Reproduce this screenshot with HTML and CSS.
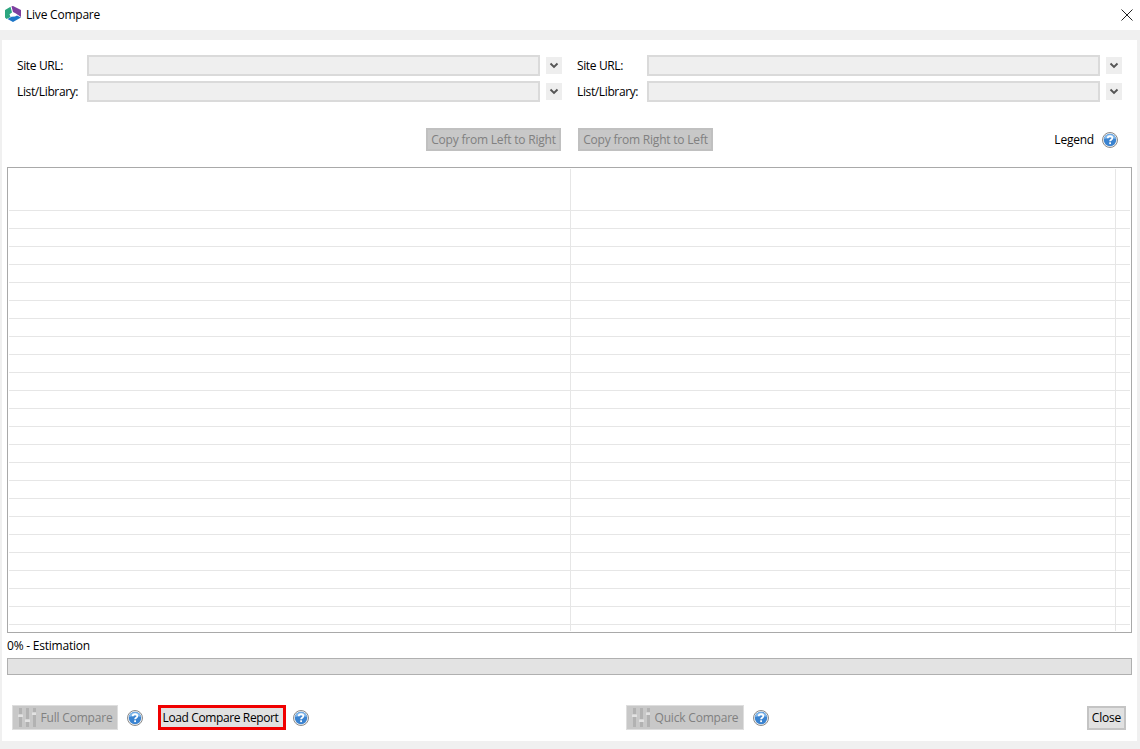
FILE: index.html
```html
<!DOCTYPE html>
<html lang="en">
<head>
<meta charset="utf-8">
<title>Live Compare</title>
<link rel="stylesheet" href="styles.css">
</head>
<body>
<svg class="defs" width="0" height="0" aria-hidden="true">
  <defs>
    <symbol id="help" viewBox="0 0 16 16">
      <circle cx="8" cy="8" r="7.500" fill="#f2f2f2" stroke="#8a8a8a" stroke-width="1"/>
      <circle cx="8" cy="8" r="6.200" fill="#3a83d0"/>
      <path d="M2 7a6.200 6.200 0 0 1 12 0c-3.500-1.500-8.500-1.500-12 0z" fill="#86bbec"/>
      <path d="M5.700 6.200c0-1.400 1.100-2.100 2.400-2.100s2.300.8 2.300 2c0 1.700-2.300 1.700-2.300 3.100" fill="none" stroke="#fff" stroke-width="1.800"/>
      <rect x="7.200" y="10.300" width="1.800" height="1.800" fill="#fff"/>
    </symbol>
    <symbol id="sliders" viewBox="0 0 18 19">
      <path d="M1 0h3v6H1zM1 9h3v10H1zM8 0h3v11H8zM8 14h3v5H8zM15 0h3v4h-3zM15 7h3v12h-3z" fill="#b2b2b2"/>
      <path d="M0 6.500h5V9H0zM7 11.500h5V14H7zM14 4.500h4V7h-4z" fill="#e2e2e2"/>
    </symbol>
    <symbol id="chev" viewBox="0 0 16 17">
      <path d="M4.500 6.500L8 10l3.500-3.500" fill="none" stroke="#555" stroke-width="1.900"/>
    </symbol>
  </defs>
</svg>
<div class="window">
  <header class="titlebar">
    <div class="title">
      <svg class="logo" viewBox="0 0 16 16" width="16" height="16" aria-hidden="true">
        <path d="M0 4L5.500 .8 7 6.500 4.500 8.300 5.500 11 1.500 13 0 11.500z" fill="#2ba57f"/>
        <path d="M6.500 .2L8 0l8 4v7l-5.500-3.800L8 6z" fill="#7d3f9f"/>
        <path d="M2.500 13l4-2.300 3.500-.2 2-1 4 2-8 4.500z" fill="#1d76c8"/>
      </svg>
      <span>Live Compare</span>
    </div>
    <svg class="close-x" viewBox="0 0 12 12" width="12" height="12" aria-hidden="true"><path d="M.5.5l11 11M11.500.5l-11 11" stroke="#222" stroke-width="1" fill="none"/></svg>
  </header>
  <main class="panel">
    <section class="sites">
      <div class="site">
        <div class="field"><label class="lbl">Site URL:</label><div class="input"></div><div class="chev"><svg width="16" height="17"><use href="#chev"/></svg></div></div>
        <div class="field"><label class="lbl">List/Library:</label><div class="input"></div><div class="chev"><svg width="16" height="17"><use href="#chev"/></svg></div></div>
      </div>
      <div class="site">
        <div class="field"><label class="lbl">Site URL:</label><div class="input"></div><div class="chev"><svg width="16" height="17"><use href="#chev"/></svg></div></div>
        <div class="field"><label class="lbl">List/Library:</label><div class="input"></div><div class="chev"><svg width="16" height="17"><use href="#chev"/></svg></div></div>
      </div>
    </section>
    <section class="actions">
      <button class="btn copy">Copy from Left to Right</button>
      <button class="btn copy">Copy from Right to Left</button>
      <div class="legend"><span>Legend</span><svg class="help" width="16" height="16"><use href="#help"/></svg></div>
    </section>
    <section class="table">
      <div class="row head"><i></i><i></i><i></i></div>
      <div class="row"><i></i><i></i><i></i></div><div class="row"><i></i><i></i><i></i></div><div class="row"><i></i><i></i><i></i></div><div class="row"><i></i><i></i><i></i></div>
      <div class="row"><i></i><i></i><i></i></div><div class="row"><i></i><i></i><i></i></div><div class="row"><i></i><i></i><i></i></div><div class="row"><i></i><i></i><i></i></div>
      <div class="row"><i></i><i></i><i></i></div><div class="row"><i></i><i></i><i></i></div><div class="row"><i></i><i></i><i></i></div><div class="row"><i></i><i></i><i></i></div>
      <div class="row"><i></i><i></i><i></i></div><div class="row"><i></i><i></i><i></i></div><div class="row"><i></i><i></i><i></i></div><div class="row"><i></i><i></i><i></i></div>
      <div class="row"><i></i><i></i><i></i></div><div class="row"><i></i><i></i><i></i></div><div class="row"><i></i><i></i><i></i></div><div class="row"><i></i><i></i><i></i></div>
      <div class="row"><i></i><i></i><i></i></div><div class="row"><i></i><i></i><i></i></div><div class="row"><i></i><i></i><i></i></div>
      <div class="row tail"><i></i><i></i><i></i></div>
    </section>
    <div class="status">0% - Estimation</div>
    <div class="progress"></div>
    <footer class="footer">
      <button class="btn compare full"><svg width="18" height="19"><use href="#sliders"/></svg>Full Compare</button>
      <svg class="help h1" width="16" height="16"><use href="#help"/></svg>
      <button class="btn report">Load Compare Report</button>
      <svg class="help h2" width="16" height="16"><use href="#help"/></svg>
      <button class="btn compare quick"><svg width="18" height="19"><use href="#sliders"/></svg>Quick Compare</button>
      <svg class="help h3" width="16" height="16"><use href="#help"/></svg>
      <button class="btn close">Close</button>
    </footer>
  </main>
</div>
</body>
</html>
```
FILE: styles.css
```css
* { box-sizing: border-box; }
html, body { margin: 0; padding: 0; }
body {
  width: 1140px;
  height: 749px;
  overflow: hidden;
  background: #f0f0f0;
  color: #000;
  font: 12px/16px "Open Sans", "Noto Sans", sans-serif;
  letter-spacing: -0.22px;
}
.defs { display: block; height: 0; }
.window { display: flex; flex-direction: column; height: 749px; }
.titlebar {
  height: 30px;
  background: #fff;
  display: flex;
  align-items: center;
  justify-content: space-between;
  padding: 0 7px 0 5px;
  flex: none;
}
.title { display: flex; align-items: center; gap: 5px; }
.logo { display: block; margin-top: -2px; }
.close-x { display: block; margin-top: -1px; }
.panel {
  margin: 10px 3px 8px 2px;
  height: 701px;
  background: #fff;
  padding: 15px 5px 0 5px;
  display: flex;
  flex-direction: column;
}
.sites { display: flex; gap: 15px; padding-left: 10px; }
.site { width: 545px; display: flex; flex-direction: column; gap: 5px; }
.field { display: flex; align-items: center; height: 21px; }
.lbl { width: 70px; flex: none; letter-spacing: -0.37px; }
.input { width: 453px; height: 21px; background: #efefef; border: 2px solid #dadada; flex: none; }
.chev { width: 16px; height: 17px; margin-left: 6px; background: #eee; flex: none; }
.chev svg, .help { display: block; }
.actions { display: flex; align-items: center; height: 23px; margin-top: 26px; flex: none; }
.btn {
  font: inherit;
  padding: 0;
  margin: 0;
  display: flex;
  align-items: center;
  justify-content: center;
  white-space: nowrap;
  letter-spacing: -0.2px;
}
.copy { width: 135px; height: 23px; background: #c8c8c8; border: 2px solid #c0c0c0; color: #808080; }
.copy:first-child { margin-left: 419px; }
.copy + .copy { margin-left: 17px; }
.legend { display: flex; align-items: center; gap: 8px; margin-left: auto; margin-right: 14px; }
.table {
  margin-top: 16px;
  height: 466px;
  border: 1px solid #a9a9a9;
  padding: 1px 1px 0 1px;
  overflow: hidden;
  display: flex;
  flex-direction: column;
  flex: none;
}
.row { display: grid; grid-template-columns: 562px 545px 1fr; height: 18px; border-bottom: 1px solid #e6e6e6; flex: none; }
.row.head { height: 42px; }
.row.tail { border-bottom: 0; height: 6px; }
.row i { display: block; border-right: 1px solid #e6e6e6; }
.row i:last-child { border-right: 0; }
.status { margin-top: 5px; height: 15px; }
.progress { margin-top: 5px; height: 17px; background: #e3e3e3; border: 1px solid #b0b0b0; flex: none; }
.footer { display: flex; align-items: center; margin-top: 30px; height: 25px; }
.compare { height: 25px; background: #c8c8c8; border: 1px solid #dedede; color: #808080; gap: 5px; }
.full { width: 106px; margin-left: 5px; }
.report { width: 128px; height: 25px; background: #e1e1e1; border: 3px solid #f00000; color: #000; margin-left: 15px; padding-right: 3px; letter-spacing: -0.38px; }
.h1 { margin-left: 9px; }
.h2 { margin-left: 7px; }
.quick { width: 118px; margin-left: 317px; }
.h3 { margin-left: 9px; }
.close { width: 39px; height: 24px; margin-left: auto; margin-right: 6px; background: #e1e1e1; border: 2px solid #c4c4c4; color: #000; }
```
